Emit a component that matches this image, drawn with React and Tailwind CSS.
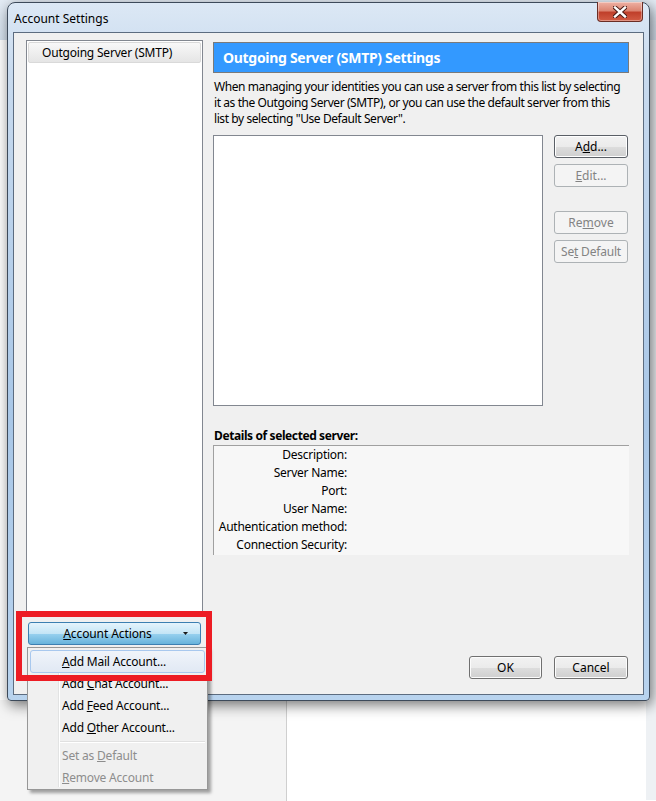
import React from "react";

const Btn = ({ children, disabled, isDefault, className = "" }) => (
  <div
    className={`flex h-[23px] items-center justify-center rounded-[3px] border text-[12px] ${
      disabled
        ? "border-[#adb2b5] bg-[#f4f4f4] text-[#838383]"
        : isDefault
        ? "border-[#5a5f66] bg-[linear-gradient(#f2f2f2_0%,#ebebeb_50%,#dddddd_51%,#cfcfcf_100%)] text-black shadow-[inset_0_0_0_1px_#ffffff]"
        : "border-[#707070] bg-[linear-gradient(#f2f2f2_0%,#ebebeb_50%,#dddddd_51%,#cfcfcf_100%)] text-black shadow-[inset_0_0_0_1px_#fcfcfc]"
    } ${className}`}
  >
    {children}
  </div>
);

const details = [
  "Description:",
  "Server Name:",
  "Port:",
  "User Name:",
  "Authentication method:",
  "Connection Security:",
];

export default function App() {
  return (
    <div className="relative h-[801px] w-[656px] overflow-hidden bg-white font-['Noto_Sans',sans-serif] text-[12px] text-black">
      {/* background application behind the dialog */}
      <div className="absolute inset-x-0 top-0 h-[40px] bg-[linear-gradient(#e4ecf5,#d5e1ee)]" />
      <div className="absolute left-[300px] top-[10px] h-[12px] w-[60px] rounded bg-[#c9d3de] blur-[2px]" />
      <div className="absolute left-[395px] top-[10px] h-[12px] w-[60px] rounded bg-[#c3ccd8] blur-[2px]" />
      <div className="absolute left-[480px] top-[10px] h-[12px] w-[50px] rounded bg-[#c3ccd8] blur-[2px]" />
      <div className="absolute right-0 top-[40px] h-[760px] w-[10px] bg-[#eef1f4]" />
      <div className="absolute left-0 top-[700px] h-[101px] w-[287px] border-r border-[#cfcfcf] bg-[#f4f4f4]" />

      {/* dialog window */}
      <div className="absolute left-[7px] top-[2px] flex h-[699px] w-[643px] flex-col rounded-t-[8px] rounded-b-[4px] border border-[#3d4a5a] bg-[linear-gradient(#dce8f5_0%,#c8daee_10%,#a9c7e7_60%,#b8d3ee_100%)] px-[5px] pb-[5px] shadow-[2px_4px_14px_rgba(0,0,0,0.55)]">
        {/* title bar */}
        <div className="relative flex h-[29px] shrink-0 items-center">
          <span className="ml-[1px] mt-[2px] text-[12px] text-black">Account Settings</span>
          <div className="absolute right-[1px] top-[-1px] flex h-[20px] w-[46px] items-center justify-center rounded-b-[4px] border border-t-0 border-[#6a2d25] bg-[linear-gradient(#eeb1a4_0%,#dc8572_45%,#c0402b_55%,#d25c44_100%)] shadow-[inset_0_0_0_1px_rgba(255,255,255,0.35)]">
            <svg width="14" height="12" viewBox="0 0 14 12">
              <path d="M2 1.5 L12 10.5 M12 1.5 L2 10.5" stroke="#4a1a14" strokeWidth="4.4" strokeLinecap="square" />
              <path d="M2 1.5 L12 10.5 M12 1.5 L2 10.5" stroke="#ffffff" strokeWidth="2.4" strokeLinecap="square" />
            </svg>
          </div>
        </div>

        {/* client area */}
        <div className="flex min-h-0 flex-1 border border-[#5c6c80] bg-[#f0f0f0] pl-[12px] pt-[7px]">
          {/* left column */}
          <div className="flex w-[177px] flex-col">
            <div className="h-[574px] border border-[#828790] bg-white p-[1px]">
              <div className="flex h-[21px] items-center rounded-[2px] border border-[#d9d9d9] bg-[linear-gradient(#f8f8f8,#e5e5e5)] pl-[13px] tracking-[-0.2px]">
                Outgoing Server (SMTP)
              </div>
            </div>
            <div className="relative mx-[2px] mt-[8px] flex h-[23px] items-center justify-center rounded-[3px] border border-[#3c7fb1] bg-[linear-gradient(#e5f4fc_0%,#c4e5f6_50%,#98d1ef_51%,#68b3db_100%)]">
              <span className="mr-[14px] tracking-[-0.1px]">
                <u>A</u>ccount Actions
              </span>
              <svg className="absolute right-[12px] top-[9px]" width="5" height="3" viewBox="0 0 5 3">
                <path d="M0 0 H5 L2.5 3 Z" fill="#1a1a1a" />
              </svg>
            </div>
          </div>

          {/* right column */}
          <div className="ml-[10px] flex w-[416px] flex-col pt-[2px]">
            <div className="flex h-[31px] items-center border border-[#7a7a7a] bg-[#3399ff] pl-[9px] text-[14px] font-bold tracking-[-0.3px] text-white">
              Outgoing Server (SMTP) Settings
            </div>
            <p className="mt-[6px] whitespace-nowrap pl-[1px] text-[12px] leading-[16px] tracking-[-0.42px]">
              When managing your identities you can use a server from this list by selecting
              <br />
              it as the Outgoing Server (SMTP), or you can use the default server from this
              <br />
              list by selecting "Use Default Server".
            </p>
            <div className="mt-[8px] flex">
              <div className="h-[271px] w-[330px] border border-[#828790] bg-white" />
              <div className="ml-[11px] flex w-[74px] flex-col">
                <Btn isDefault>
                  <span>
                    A<u>d</u>d...
                  </span>
                </Btn>
                <Btn disabled className="mt-[6px]">
                  <span>
                    <u>E</u>dit...
                  </span>
                </Btn>
                <Btn disabled className="mt-[24px]">
                  <span>
                    Re<u>m</u>ove
                  </span>
                </Btn>
                <Btn disabled className="mt-[6px]">
                  <span className="tracking-[-0.2px]">
                    Se<u>t</u> Default
                  </span>
                </Btn>
              </div>
            </div>
            <div className="mt-[22px] h-[16px] pl-[1px] font-bold leading-[16px] tracking-[-0.4px]">
              Details of selected server:
            </div>
            <div className="mt-[1px] border-l border-t border-[#a0a0a0] bg-[#f7f7f7] pb-[1px]">
              {details.map((d) => (
                <div key={d} className="flex h-[18px] items-center">
                  <span className="w-[133px] text-right tracking-[-0.25px]">{d}</span>
                </div>
              ))}
            </div>
            <div className="mt-[101px] flex justify-end gap-[12px] pr-[1px]">
              <Btn className="w-[73px]">OK</Btn>
              <Btn className="w-[74px]">Cancel</Btn>
            </div>
          </div>
        </div>
      </div>

      {/* dropdown menu */}
      <div className="absolute left-[27px] top-[647px] w-[181px] border border-[#979797] bg-[#f0f0f0] px-[2px] pt-[2px] tracking-[-0.2px] shadow-[3px_3px_3px_rgba(0,0,0,0.35)]">
        <div className="absolute bottom-[2px] left-[30px] top-[2px] border-l border-[#e2e3e3] border-r border-r-white" />
        <div className="relative flex h-[23px] items-center rounded-[3px] border border-[#a8c8ee] bg-[linear-gradient(#f0f4fa,#e1e9f4)] pl-[31px]">
          <span>
            <u>A</u>dd Mail Account...
          </span>
        </div>
        {[
          ["Add ", "C", "hat Account..."],
          ["Add ", "F", "eed Account..."],
          ["Add ", "O", "ther Account..."],
        ].map(([a, k, b]) => (
          <div key={k} className="relative flex h-[22px] items-center pl-[32px]">
            <span>
              {a}
              <u>{k}</u>
              {b}
            </span>
          </div>
        ))}
        <div className="relative my-[2px] ml-[30px] h-[2px] border-b border-t border-b-white border-t-[#e0e0e0]" />
        <div className="relative flex h-[22px] items-center pl-[32px] text-[#8d8d8d]">
          <span>
            Set as <u>D</u>efault
          </span>
        </div>
        <div className="relative flex h-[22px] items-center pl-[32px] text-[#8d8d8d]">
          <span>
            <u>R</u>emove Account
          </span>
        </div>
      </div>

      {/* red highlight */}
      <div className="pointer-events-none absolute left-[16px] top-[611px] h-[70px] w-[196px] border-[6px] border-[#ed1c24]" />
    </div>
  );
}
